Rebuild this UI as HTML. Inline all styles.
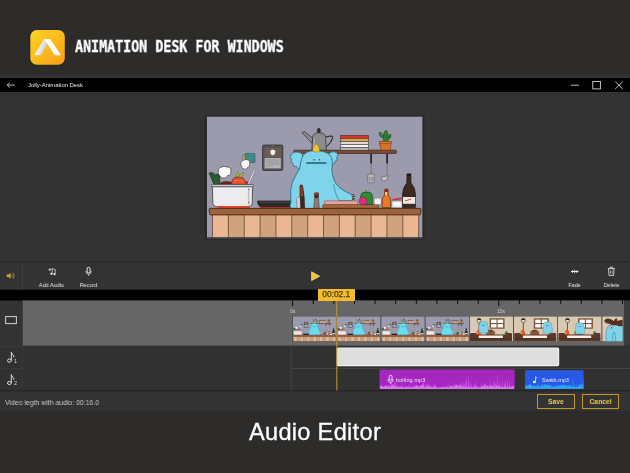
<!DOCTYPE html>
<html>
<head>
<meta charset="utf-8">
<title>Animation Desk for Windows - Audio Editor</title>
<style>
html,body{margin:0;padding:0;background:#2d2c2b;}
body{width:630px;height:473px;overflow:hidden;position:relative;font-family:"Liberation Sans",sans-serif;color:#fff;}
.abs{position:absolute;}
#title,#caption,#status,.lbl,.btn,#tl,.clipt,.tk,.sub,#tbar .t{will-change:transform;}
#stage{position:absolute;left:0;top:0;width:630px;height:473px;overflow:hidden;background:#2d2c2b;}
#title{position:absolute;left:75px;top:38px;font-family:"DejaVu Sans Mono","Liberation Mono",monospace;font-weight:bold;font-size:15.6px;line-height:normal;white-space:nowrap;transform-origin:0 0;transform:scaleX(0.855);color:#fff;-webkit-text-stroke:0.35px #fff;will-change:transform;}
#win{position:absolute;left:0;top:77.8px;width:630px;height:333px;background:#333333;}
#tbar{position:absolute;left:0;top:0;width:630px;height:14.7px;background:#000;}
#tbar .t{position:absolute;left:27.5px;top:4px;font-size:5.9px;line-height:7px;color:#e6e6e6;white-space:nowrap;}
#caption{position:absolute;left:0;top:417.6px;width:630px;text-align:center;font-size:23.6px;line-height:28px;color:#fff;white-space:nowrap;letter-spacing:0.3px;-webkit-text-stroke:0.3px #fff;}
.lbl{position:absolute;font-size:6.1px;line-height:7px;color:#e4e4e4;white-space:nowrap;text-align:center;transform:scaleX(0.9);}
#status{position:absolute;left:5.2px;top:398.6px;font-size:7.5px;line-height:8px;color:#c8c8c8;white-space:nowrap;transform-origin:0 0;transform:scaleX(0.918);}
.btn{position:absolute;top:394.2px;height:13px;border:1px solid #c3952b;box-sizing:content-box;font-size:6.8px;line-height:13px;font-weight:bold;color:#f2c547;text-align:center;}
#tl{position:absolute;left:318.2px;top:289.3px;width:36.6px;height:11.6px;background:#f3bb2d;color:#4a3a12;font-size:8.4px;line-height:11.4px;text-align:center;-webkit-text-stroke:0.25px #4a3a12;}
.clipt{position:absolute;font-size:5.5px;line-height:7px;color:#f2e6f6;white-space:nowrap;}
.sub{position:absolute;font-size:5.4px;line-height:7px;color:#dcdcdc;}
.tk{position:absolute;font-size:5px;line-height:6px;color:#d0d0d0;}
</style>
</head>
<body>
<div id="stage">

<!-- header -->
<svg class="abs" style="left:26px;top:26px" width="44" height="44" viewBox="26 26 44 44">
  <defs>
    <linearGradient id="lg" x1="0" y1="0" x2="1" y2="1">
      <stop offset="0" stop-color="#ffd323"/>
      <stop offset="0.55" stop-color="#fbb81c"/>
      <stop offset="1" stop-color="#f89c1a"/>
    </linearGradient>
    <linearGradient id="la" x1="0" y1="0" x2="1" y2="0.35">
      <stop offset="0.25" stop-color="#ffffff"/>
      <stop offset="0.8" stop-color="#cfd0e2"/>
    </linearGradient>
  </defs>
  <rect x="29.6" y="29.4" width="35.8" height="35.9" rx="7" fill="#222120"/>
  <rect x="30.3" y="30.1" width="34.5" height="34.6" rx="6.4" fill="url(#lg)"/>
  <path d="M44.2 39.1 H50 L40.6 55.3 H34.2 Z" fill="url(#la)"/>
  <path d="M44.2 39.1 H50 L61 55.3 H54.8 Z" fill="#ffffff"/>
</svg>
<div id="title">ANIMATION DESK FOR WINDOWS</div>

<div id="glow" class="abs" style="left:0;top:74px;width:630px;height:4px;background:linear-gradient(#2d2c2b,#363534)"></div>
<!-- app window -->
<div id="win">
  <div id="tbar">
    <svg class="abs" style="left:0;top:0" width="630" height="15" viewBox="0 78 630 15">
      <g stroke="#dedede" stroke-width="0.85" fill="none">
        <path d="M7.2 85.1 H14.6 M9.8 82.6 L7.2 85.1 L9.8 87.6"/>
        <path d="M571 85.2 H579"/>
        <rect x="592.8" y="81.5" width="7.6" height="7.4"/>
        <path d="M615.2 81.5 L622.8 89 M622.8 81.5 L615.2 89"/>
      </g>
    </svg>
    <div class="t">Jolly-Animation Desk</div>
  </div>
</div>

<!-- PREVIEW -->
<svg id="preview" class="abs" style="left:204px;top:114px" width="222" height="127" viewBox="204 114 222 127">
<!--PV0--><defs>
<symbol id="kitchen" viewBox="207 116.4 215.6 122.2" preserveAspectRatio="none">
  <rect x="207" y="116.4" width="215.6" height="122.2" fill="#9c9aad"/>
  <!-- shelf -->
  <rect x="293.8" y="150.2" width="102.6" height="3.2" rx="1" fill="#7d4b33" stroke="#3b2419" stroke-width="0.7"/>
  <!-- kettle -->
  <g stroke="#333336" stroke-width="0.8" stroke-linejoin="round">
    <path d="M312.3 143.5 L302.2 132.6 L304.6 131.6 L312.6 138.2 Z" fill="#8f8f8f"/>
    <path d="M325.6 137 Q333.5 134.8 332.6 137.6 Q330.8 143.5 326 146.8" fill="none" stroke-width="1.2"/>
    <path d="M311.8 150.2 L312.6 137.2 Q313 133 318.8 132.6 Q325.2 133 325.6 137.2 L326.4 150.2 Z" fill="#8c8c8c"/>
    <rect x="317.4" y="128.6" width="2.8" height="4" rx="0.8" fill="#2a2a2a"/>
  </g>
  <path d="M314.2 138 L313.8 149" stroke="#b5b5b5" stroke-width="1" fill="none"/>
  <!-- books -->
  <g stroke="#3a3030" stroke-width="0.55">
    <rect x="340.5" y="135.4" width="28" height="3.1" fill="#d8332b"/>
    <rect x="340.8" y="138.5" width="27.6" height="3" fill="#e0a23c"/>
    <rect x="340.5" y="141.5" width="28" height="2.9" fill="#d9d9d9"/>
    <rect x="340.8" y="144.4" width="27.6" height="2.9" fill="#f4f4f4"/>
    <rect x="340.5" y="147.3" width="28" height="2.9" fill="#b9b9b9"/>
  </g>
  <!-- cactus -->
  <g stroke="#1f4a1f" stroke-width="0.5" fill="#2f7d32">
    <path d="M383.6 142 Q382.6 134 384.6 131.2 Q386.6 129.6 387.6 132 Q388.6 136 388 142 Z"/>
    <path d="M383.4 138 Q379.4 137.6 379 133.6 Q379.4 131.4 381 132.4 Q381.6 135 383.6 135.4 Z"/>
    <path d="M388 139.4 Q391.4 138.4 391 134.8 Q390.2 133.2 389.2 134.6 Q389 136.6 387.8 137 Z"/>
  </g>
  <path d="M379.6 141.8 H391.2 L390.2 150.2 H380.8 Z" fill="#db6f2a" stroke="#5a2a12" stroke-width="0.5"/>
  <rect x="379.4" y="141.4" width="12" height="2" fill="#e27a33" stroke="#5a2a12" stroke-width="0.4"/>
  <!-- hanging utensils -->
  <g>
    <rect x="370.2" y="153.4" width="1.8" height="10.4" rx="0.8" fill="#2b2b2b"/>
    <rect x="370.7" y="163.8" width="0.9" height="10.4" fill="#7b7b7b"/>
    <rect x="367.8" y="174" width="6.4" height="8.8" rx="1.2" fill="#b9b9b9" stroke="#4a4a4a" stroke-width="0.5"/>
    <path d="M369.6 177 V181.4 M371 177 V181.4 M372.4 177 V181.4" stroke="#6a6a6a" stroke-width="0.5"/>
    <rect x="386.2" y="153.4" width="1.8" height="10.4" rx="0.8" fill="#2b2b2b"/>
    <rect x="386.7" y="163.8" width="0.9" height="12" fill="#7b7b7b"/>
    <path d="M381.2 177.4 Q381.6 181.4 385 180.8 Q388.2 180 387.8 175.6 Z" fill="#c4c4c4" stroke="#4a4a4a" stroke-width="0.5"/>
  </g>
  <!-- poster -->
  <rect x="262.6" y="145" width="20.2" height="25.4" rx="1.2" fill="#55555a" stroke="#2d2d30" stroke-width="0.8"/>
  <rect x="264.6" y="148" width="16.2" height="9.2" fill="#6d5c52"/>
  <path d="M270.4 150.6 L272.8 149.4 L275.2 150.6 L275 154 L272.8 155.4 L270.6 154 Z" fill="#f2f2f2"/>
  <rect x="264.6" y="158" width="16.2" height="10.4" fill="#b4b4b6"/>
  <path d="M266 160 H279.4 M266 162 H279.4 M266 164 H279.4 M266 166 H273" stroke="#7a7a7e" stroke-width="0.6"/>
  <rect x="271.6" y="144.2" width="2.4" height="2" fill="#8a5a3a"/>
  <!-- sticky note -->
  <rect x="243" y="155" width="3.4" height="5.6" rx="1" fill="#e8b540" stroke="#3a3030" stroke-width="0.4"/>
  <rect x="245" y="153.4" width="10" height="9.2" rx="0.8" fill="#3c8b8c" stroke="#2a4a4c" stroke-width="0.5"/>
  <!-- steam clouds -->
  <path d="M241 163.6 Q240 161 243 160.6 Q245.6 158.6 248 160 Q250.6 160.6 249.6 163.6 Q250.4 167 247.4 167.6 Q246.6 170.2 244 169 Q241.2 168.6 241.6 166 Q240 165 241 163.6 Z" fill="#fbfbfb" stroke="#4a4444" stroke-width="0.7"/>
  <path d="M218.6 171 Q217 168.4 220.6 167.4 Q224 165.6 227 167 Q231.4 167 230.8 171 Q231.6 175.4 227.6 175.6 Q226.6 178.8 223.4 178 Q220.4 178.4 220 175.6 Q217.2 174.6 218.6 171 Z" fill="#fbfbfb" stroke="#4a4444" stroke-width="0.7"/>
  <!-- veggies in pot -->
  <path d="M209 173 Q213 171.6 215.6 175 Q217.6 172.6 219.4 175.6 L220 184.6 H214 Q211.6 178.6 209 173 Z" fill="#2a5d2c" stroke="#16331a" stroke-width="0.7"/>
  <path d="M219 184.6 Q222 180.4 227 181.4 Q231 181 233 184.6 Z" fill="#6a1f1c"/>
  <path d="M237.4 178 Q235.8 173.6 237.4 171.6 Q239 173.4 239.6 176 Q241.6 172.6 243.6 172.6 Q243.2 176 240.6 178.6 Z" fill="#a5c23a" stroke="#3a5a1a" stroke-width="0.4"/>
  <path d="M231.6 184.6 Q231 178.4 237 177 Q243.6 176.6 245.4 181.6 Q245.8 184 245 184.6 Z" fill="#e5532d" stroke="#5a2012" stroke-width="0.7"/>
  <path d="M233.6 181 Q238 179.6 243.4 181.4" stroke="#f08a5a" stroke-width="0.7" fill="none"/>
  <circle cx="247.6" cy="183" r="2" fill="#c52a2a"/>
  <!-- ladle handle in pot -->
  <path d="M254 169.6 L255.4 170.2 L249 184.6 L247.4 184.2 Z" fill="#e9e9e9" stroke="#5a5555" stroke-width="0.4"/>
  <!-- pot -->
  <path d="M218 204 Q222 200.4 226 205 Q230 201 234 205 Q238 201 242 205 Q246 201.4 249.6 204.6 L250 208.4 H217.6 Z" fill="#e5452b"/>
  <path d="M212.4 186.4 H252.6 L252.2 203.4 Q252 206.4 248.6 206.6 H216.4 Q213 206.4 212.8 203.4 Z" fill="#ececee" stroke="#45454a" stroke-width="0.9"/>
  <rect x="211.4" y="184.4" width="42" height="2.4" rx="1" fill="#cdcdd0" stroke="#45454a" stroke-width="0.8"/>
  <path d="M248.6 188 V205.6" stroke="#bcbcc0" stroke-width="1.4"/>
  <circle cx="249" cy="189.6" r="0.6" fill="#555"/><circle cx="249" cy="202.4" r="0.6" fill="#555"/>
  <path d="M218 206.8 H249" stroke="#e5452b" stroke-width="1.6"/>
  <!-- pan -->
  <path d="M259.4 206.4 H294 V208.4 H259.4 Z" fill="#d8402a"/>
  <path d="M257.6 201 H295.4 Q295.6 206.6 291 206.8 H262 Q257.6 206.6 257.6 201 Z" fill="#29292c" stroke="#161618" stroke-width="0.7"/>
  <path d="M259 202.2 H294" stroke="#5a5a60" stroke-width="0.7"/>
  <!-- monster -->
  <g fill="#80d4ea" stroke="#2a7690" stroke-width="0.95" stroke-linejoin="round">
    <path d="M302.6 155.6 C302.3 153.4 300.8 153.2 299.6 152.6 C298.4 152.0 296.5 151.9 295.2 152.1 C293.9 152.3 292.8 152.7 292.0 153.6 C291.2 154.5 290.4 156.3 290.4 157.3 C290.4 158.3 291.7 158.8 291.8 159.6 C291.9 160.4 290.7 161.3 290.9 162.0 C291.1 162.7 292.8 162.9 293.2 163.6 C293.6 164.3 292.9 165.5 293.4 166.0 C293.9 166.5 295.5 166.2 296.4 166.6 C297.3 167.0 297.8 168.7 298.6 168.6 C299.4 168.5 300.7 168.2 301.4 166.0 C302.1 163.8 302.9 157.8 302.6 155.6 Z"/>
    <path d="M328.4 155.0 C328.6 153.7 329.8 152.9 330.6 152.4 C331.4 151.9 332.4 151.7 333.4 151.8 C334.4 151.9 335.9 152.2 336.6 152.8 C337.4 153.4 337.9 154.6 337.9 155.4 C337.9 156.2 336.7 156.8 336.6 157.6 C336.5 158.4 337.5 159.3 337.2 160.0 C336.9 160.7 335.4 160.9 334.8 161.6 C334.2 162.3 334.4 163.5 333.8 164.0 C333.2 164.5 331.7 165.3 331.0 164.6 C330.3 163.9 330.0 161.6 329.6 160.0 C329.2 158.4 328.2 156.3 328.4 155.0 Z"/>
    <path d="M316.5 150.8 C314.3 150.8 311.9 150.8 310.0 151.2 C308.1 151.6 306.7 152.2 305.4 153.2 C304.1 154.2 303.2 155.4 302.4 157.0 C301.6 158.6 301.1 161.1 300.6 163.0 C300.1 164.9 300.4 166.5 299.6 168.5 C298.8 170.5 297.2 172.7 296.0 175.0 C294.8 177.3 293.3 180.1 292.4 182.6 C291.5 185.1 291.0 187.2 290.8 190.2 C290.6 193.2 290.8 197.8 291.0 200.8 C291.2 203.8 288.2 207.1 292.2 208.4 C296.2 209.7 307.2 208.6 315.0 208.6 C322.8 208.6 335.0 209.7 339.0 208.4 C343.0 207.1 338.0 202.3 338.8 201.0 C339.6 199.7 341.9 200.9 344.0 200.8 C346.1 200.7 349.9 201.0 351.5 200.4 C353.1 199.8 353.6 198.3 353.8 197.4 C354.0 196.5 353.8 195.7 352.6 194.8 C351.5 194.0 348.9 193.4 346.9 192.3 C344.9 191.2 342.6 189.9 340.8 188.5 C339.0 187.1 337.5 185.8 336.3 184.0 C335.1 182.2 334.1 180.3 333.4 178.0 C332.7 175.7 332.1 172.8 331.9 170.4 C331.7 168.0 332.4 165.7 332.3 163.5 C332.2 161.3 332.0 159.1 331.4 157.5 C330.8 155.9 329.8 154.8 328.4 153.8 C327.0 152.8 325.0 152.0 323.0 151.5 C321.0 151.0 318.7 150.9 316.5 150.8 Z"/>
  </g>
  <path d="M300.8 184 Q299.4 196 300.4 208" stroke="#2b7d97" stroke-width="0.7" fill="none"/>
  <path d="M333.6 184 Q334.6 193 338.8 200.6" stroke="#2b7d97" stroke-width="0.7" fill="none"/>
  <path d="M306.8 163 H326" stroke="#245a6e" stroke-width="1.3" stroke-linecap="round"/>
  <circle cx="314" cy="159.8" r="0.8" fill="#245a6e"/><circle cx="319.4" cy="159.8" r="0.8" fill="#245a6e"/>
  <path d="M312.8 151.6 Q313 147 314.6 145.6 Q315.2 144 316.6 144.2 Q318 144.4 318.2 146 Q319.8 148 319.8 151.6 Q316.4 152.8 312.8 151.6 Z" fill="#f2c230" stroke="#8a6a14" stroke-width="0.4"/>
  <!-- hand + thing -->
  <path d="M351.4 194.6 Q354.6 193.4 355 196 Q355.6 199.4 352.6 200.4 Z" fill="#3a3a3e"/>
  <path d="M352 196 L354.6 195.4 M352.4 198 L355 197.4" stroke="#e8e8e8" stroke-width="0.6"/>
  <!-- knife block -->
  <path d="M297 208.4 L296.6 199.6 Q298.2 196 300.2 196 L304.6 208.4 Z" fill="#d2d2d6" stroke="#3a3a3e" stroke-width="0.4"/>
  <path d="M299.6 185.4 Q301.6 184.2 303 185.6 L304.6 197.4 L305 208.4 L300.4 208.4 L299.8 197 Z" fill="#3a2a26"/>
  <path d="M300.2 186 Q301.4 185.2 302.4 186 L303.4 196 L300.6 196.4 Z" fill="#8a3f22"/>
  <!-- pepper shaker -->
  <path d="M314.4 198 L318.6 198 L319.4 208.4 L313.6 208.4 Z" fill="#8b7b73" stroke="#3c3030" stroke-width="0.4"/>
  <rect x="314.2" y="192.6" width="4.6" height="5.4" rx="1" fill="#4a2622"/>
  <rect x="314.6" y="193.2" width="3.8" height="1.8" rx="0.6" fill="#b03028"/>
  <!-- cutting boards -->
  <rect x="324.6" y="200.8" width="33" height="4" rx="0.8" fill="#e4a39b" stroke="#6a3a34" stroke-width="0.4"/>
  <rect x="322.6" y="204.6" width="56" height="3.8" rx="0.6" fill="#a5663f" stroke="#4f2c1a" stroke-width="0.4"/>
  <!-- green pepper + onion -->
  <path d="M361.4 204.6 Q359.6 197 361.6 193.6 Q363.6 191.6 366 192.6 Q368.6 191.4 371 193 Q373.4 196 372.2 204.6 Z" fill="#2e8a2f" stroke="#17451a" stroke-width="0.7"/>
  <path d="M365.8 193 L366.4 190 " stroke="#3d6a1a" stroke-width="1" />
  <ellipse cx="363" cy="201" rx="3.9" ry="3.9" fill="#d9327a" stroke="#6a1236" stroke-width="0.4"/>
  <!-- small bowl -->
  <path d="M374 199 Q377.6 196.6 381.4 199 L381 204.6 H374.6 Z" fill="#f3f3f5" stroke="#5a5a60" stroke-width="0.4"/>
  <!-- orange bottle -->
  <path d="M384.6 191.6 H388.2 L388.4 195.4 Q390.8 197.6 390.6 201 L390.6 207.6 H382.2 L382.2 201 Q382 197.6 384.4 195.4 Z" fill="#ea7a22" stroke="#5a2a10" stroke-width="0.7"/>
  <rect x="384.4" y="188.8" width="4" height="3" rx="0.6" fill="#8a241c"/>
  <path d="M386 192 V195" stroke="#f6d8b0" stroke-width="1.6"/>
  <!-- white container -->
  <path d="M392.6 199 L401.6 197.6 L401.8 199.2 L392.8 200.6 Z" fill="#c6322a"/>
  <rect x="391.8" y="201" width="10.4" height="6.8" rx="0.8" fill="#e7e7ea" stroke="#55555a" stroke-width="0.4"/>
  <rect x="393.4" y="202.4" width="7" height="3.2" fill="#f8f8fa"/>
  <!-- dark bottle -->
  <path d="M407 174.4 H410.8 L411 183 Q415.4 188 415.4 194 L415.4 207.6 H402.6 L402.6 194 Q402.6 188 406.8 183 Z" fill="#3a2a22" stroke="#1c1410" stroke-width="0.7"/>
  <rect x="406.8" y="173.6" width="4.2" height="2.2" rx="0.6" fill="#1f1815"/>
  <rect x="403" y="197" width="12.2" height="6.8" fill="#efeadf"/>
  <path d="M405 201 L411 199" stroke="#c03a2a" stroke-width="0.9"/>
  <!-- counter -->
  <rect x="212.50" y="214.8" width="15.86" height="22.6" fill="#e9b792"/><rect x="228.36" y="214.8" width="15.86" height="22.6" fill="#cfa37e"/><rect x="244.22" y="214.8" width="15.86" height="22.6" fill="#e9b792"/><rect x="260.08" y="214.8" width="15.86" height="22.6" fill="#cfa37e"/><rect x="275.94" y="214.8" width="15.86" height="22.6" fill="#e9b792"/><rect x="291.80" y="214.8" width="15.86" height="22.6" fill="#cfa37e"/><rect x="307.66" y="214.8" width="15.86" height="22.6" fill="#e9b792"/><rect x="323.52" y="214.8" width="15.86" height="22.6" fill="#cfa37e"/><rect x="339.38" y="214.8" width="15.86" height="22.6" fill="#e9b792"/><rect x="355.24" y="214.8" width="15.86" height="22.6" fill="#cfa37e"/><rect x="371.10" y="214.8" width="15.86" height="22.6" fill="#e9b792"/><rect x="386.96" y="214.8" width="15.86" height="22.6" fill="#cfa37e"/><rect x="402.82" y="214.8" width="15.86" height="22.6" fill="#e9b792"/><path d="M212.50 214.8 V237.4" stroke="#6e4229" stroke-width="0.8"/><path d="M228.36 214.8 V237.4" stroke="#6e4229" stroke-width="0.8"/><path d="M244.22 214.8 V237.4" stroke="#6e4229" stroke-width="0.8"/><path d="M260.08 214.8 V237.4" stroke="#6e4229" stroke-width="0.8"/><path d="M275.94 214.8 V237.4" stroke="#6e4229" stroke-width="0.8"/><path d="M291.80 214.8 V237.4" stroke="#6e4229" stroke-width="0.8"/><path d="M307.66 214.8 V237.4" stroke="#6e4229" stroke-width="0.8"/><path d="M323.52 214.8 V237.4" stroke="#6e4229" stroke-width="0.8"/><path d="M339.38 214.8 V237.4" stroke="#6e4229" stroke-width="0.8"/><path d="M355.24 214.8 V237.4" stroke="#6e4229" stroke-width="0.8"/><path d="M371.10 214.8 V237.4" stroke="#6e4229" stroke-width="0.8"/><path d="M386.96 214.8 V237.4" stroke="#6e4229" stroke-width="0.8"/><path d="M402.82 214.8 V237.4" stroke="#6e4229" stroke-width="0.8"/><path d="M418.68 214.8 V237.4" stroke="#6e4229" stroke-width="0.8"/>
  <path d="M209.6 208.4 H420.4 Q421.2 208.4 421 209.6 L420.6 213.8 Q420.4 214.9 419.4 214.9 H210.6 Q209.6 214.9 209.5 213.8 L209.2 209.6 Q209.2 208.4 209.6 208.4 Z" fill="#9c6239" stroke="#42251a" stroke-width="0.9"/>
  <rect x="207" y="237.3" width="215.6" height="1.4" fill="#2e2a2c"/>
</symbol>
</defs>

<rect x="204.6" y="114.9" width="220" height="125" fill="#2a2a29"/>
<use href="#kitchen" x="207" y="116.4" width="215.6" height="122.2"/>
<!--PV1-->
</svg>

<!-- toolbar / timeline chrome -->
<svg class="abs" style="left:0;top:255px" width="630" height="160" viewBox="0 255 630 160">
  <!-- toolbar top line -->
  <rect x="0" y="261.5" width="630" height="1" fill="#222"/>
  <rect x="22" y="264" width="0.8" height="25" fill="#444"/>
  <!-- black ruler bar -->
  <rect x="0" y="289.7" width="630" height="10.8" fill="#000"/>
  <!-- video track -->
  <rect x="22.3" y="300.5" width="601.7" height="45.3" fill="#666666"/>
  <rect x="624" y="300.5" width="6" height="45.3" fill="#3a3a3a"/>
  <!-- audio tracks -->
  <rect x="0" y="345.8" width="630" height="45" fill="#313131"/>
  <rect x="0" y="345.8" width="22" height="0.8" fill="#3d3d3d"/>
  <rect x="0" y="368" width="22" height="0.8" fill="#3d3d3d"/>
  <rect x="22" y="300.5" width="0.8" height="90" fill="#3a3a3a"/>
  <rect x="290.8" y="345.8" width="0.8" height="44.8" fill="#484848"/>
  <rect x="291" y="368" width="339" height="0.8" fill="#484848"/>
  <rect x="0" y="390.3" width="630" height="1" fill="#232323"/>
  <!--TL0--><defs>
<g id="lbase">
  <rect x="0" y="0" width="44.2" height="25.3" fill="#d8c9b4"/>
  <rect x="20.3" y="2" width="15.1" height="10.4" fill="#7b5238"/>
  <rect x="21.7" y="3.3" width="5.6" height="3.4" fill="#fbfbfb"/><rect x="28.4" y="3.3" width="5.6" height="3.4" fill="#fbfbfb"/>
  <rect x="21.7" y="7.8" width="5.6" height="3.4" fill="#fbfbfb"/><rect x="28.4" y="7.8" width="5.6" height="3.4" fill="#fbfbfb"/>
  <rect x="9.2" y="5.6" width="0.8" height="8" fill="#4a3a30"/>
  <ellipse cx="9.6" cy="4.4" rx="2" ry="2.1" fill="#ecd2b8" stroke="#3a2a22" stroke-width="0.5"/>
  <path d="M7.5 4 Q7.6 1.9 9.6 2 Q11.7 1.9 11.8 4 Q9.6 2.8 7.5 4 Z" fill="#2a1c18"/>
  <path d="M7 19 Q6.4 14 9 13.2 Q11.6 13.6 11.4 19 Z" fill="#e4522a"/>
  <path d="M6.8 17 Q7.6 14.8 9 15.4 L8.6 19 H6.8 Z" fill="#f08a2a"/>
  <rect x="16.7" y="14.4" width="9" height="4.6" rx="1.6" fill="#8b5a3b"/>
  <rect x="18.6" y="13.4" width="5" height="2" rx="1" fill="#6d4128"/>
  <path d="M27.9 18.8 L28.5 14 H30.4 L31 18.8 Z" fill="#e7c79c"/>
  <path d="M35.6 18.8 Q35.2 15 37.2 14.6 Q39.2 15 38.8 18.8 Z" fill="#3f8a3a"/>
  <path d="M0.4 25.3 V18 Q0.4 16.6 2 16.6 H5.6 Q7 16.6 7 18 V18.2 H36.6 V18 Q36.6 16.6 38 16.6 H41.4 Q43 16.6 43 18 V25.3 Z" fill="#59372a"/>
  <rect x="0.4" y="22.2" width="42.6" height="0.6" fill="#452a1c"/>
  <rect x="9.2" y="19.1" width="24.5" height="2.7" rx="0.5" fill="#f4f1ee"/>
</g>
<g id="mini">
  <path d="M0.6 11 Q-0.4 5 1 2.4 Q0.2 0.6 1.8 0.4 Q3 -0.4 4.6 0.2 Q6.6 -0.4 7.8 0.6 Q9.4 0.8 8.8 2.6 Q10.4 6 9.6 11 Z" fill="#7fd4ea" stroke="#3a8ea6" stroke-width="0.4"/>
  <path d="M3.2 3.6 H6.4" stroke="#2a6a80" stroke-width="0.5"/>
</g>
<symbol id="living0" viewBox="0 0 44.2 25.3" preserveAspectRatio="none">
  <use href="#lbase"/>
  <use href="#mini" x="9.2" y="5.4" transform="translate(0 0)"/>
</symbol>
<symbol id="living1" viewBox="0 0 44.2 25.3" preserveAspectRatio="none">
  <use href="#lbase"/>
  <use href="#mini" x="29.3" y="5.8"/>
</symbol>
<symbol id="living2" viewBox="0 0 44.2 25.3" preserveAspectRatio="none">
  <use href="#lbase"/>
  <use href="#mini" x="17.3" y="6.6"/>
</symbol>
<symbol id="closeup" viewBox="0 0 20.9 25.3" preserveAspectRatio="none">
  <rect x="0" y="0" width="20.9" height="25.3" fill="#d8c9b4"/>
  <path d="M4 25.3 Q3 14 6 10 Q9 7.4 13 8.6 Q18 8 20.9 9 V25.3 Z" fill="#7fd4ea" stroke="#2f7f98" stroke-width="0.5"/>
  <path d="M10.4 25.3 Q10 18 12 15.6 Q14 18 13.6 25.3" fill="none" stroke="#2f7f98" stroke-width="0.5"/>
  <path d="M2 4.4 Q4 1.4 8 2.6 Q10.6 3.4 12 4.6 Q13 1.6 14.6 2 Q15.6 3.4 15.4 5 Q18 3.4 20.9 3.8 V9.6 Q17 10.6 14 8.6 Q10 9.4 7 7.4 Q3.6 7.6 2 4.4 Z" fill="#5a2e1e"/>
  <circle cx="9.2" cy="11" r="1.6" fill="#f6f6f6" stroke="#333" stroke-width="0.4"/>
  <circle cx="9.4" cy="11.2" r="0.6" fill="#222"/>
</symbol>
</defs>
<rect x="292.10" y="299.5" width="1" height="6.6" fill="#0a0a0a"/>
<rect x="312.72" y="299.5" width="1" height="4.4" fill="#0a0a0a"/>
<rect x="333.34" y="299.5" width="1" height="4.4" fill="#0a0a0a"/>
<rect x="353.96" y="299.5" width="1" height="4.4" fill="#0a0a0a"/>
<rect x="374.58" y="299.5" width="1" height="4.4" fill="#0a0a0a"/>
<rect x="395.20" y="299.5" width="1" height="4.4" fill="#0a0a0a"/>
<rect x="415.82" y="299.5" width="1" height="4.4" fill="#0a0a0a"/>
<rect x="436.44" y="299.5" width="1" height="4.4" fill="#0a0a0a"/>
<rect x="457.06" y="299.5" width="1" height="4.4" fill="#0a0a0a"/>
<rect x="477.68" y="299.5" width="1" height="4.4" fill="#0a0a0a"/>
<rect x="498.30" y="299.5" width="1" height="6.6" fill="#0a0a0a"/>
<rect x="518.92" y="299.5" width="1" height="4.4" fill="#0a0a0a"/>
<rect x="539.54" y="299.5" width="1" height="4.4" fill="#0a0a0a"/>
<rect x="560.16" y="299.5" width="1" height="4.4" fill="#0a0a0a"/>
<rect x="580.78" y="299.5" width="1" height="4.4" fill="#0a0a0a"/>
<rect x="601.40" y="299.5" width="1" height="4.4" fill="#0a0a0a"/>
<rect x="622.02" y="299.5" width="1" height="4.4" fill="#0a0a0a"/>
<rect x="292.2" y="316.0" width="330.9" height="25.900000000000002" fill="#4a4a4a"/>
<use href="#kitchen" x="292.80" y="316.3" width="43.60" height="25.3"/>
<path transform="translate(292.50 316.3)" d="M19.2 8.6 Q18.4 7.4 19.8 7.4 Q21.8 6.6 23.8 7.4 Q25.4 7.4 24.6 8.8 Q25.4 12 27.2 14.6 Q28.2 17 27.6 18.4 H16.4 Q15.8 16 16.6 14 Q18.4 11.6 19.2 8.6 Z" fill="#69dcee" stroke="#2f8aa4" stroke-width="0.3"/>
<path transform="translate(292.50 316.3)" d="M20.4 10.4 H23.4" stroke="#2a6f86" stroke-width="0.4"/>
<use href="#kitchen" x="337.00" y="316.3" width="43.60" height="25.3"/>
<path transform="translate(336.70 316.3)" d="M19.2 8.6 Q18.4 7.4 19.8 7.4 Q21.8 6.6 23.8 7.4 Q25.4 7.4 24.6 8.8 Q25.4 12 27.2 14.6 Q28.2 17 27.6 18.4 H16.4 Q15.8 16 16.6 14 Q18.4 11.6 19.2 8.6 Z" fill="#69dcee" stroke="#2f8aa4" stroke-width="0.3"/>
<path transform="translate(336.70 316.3)" d="M20.4 10.4 H23.4" stroke="#2a6f86" stroke-width="0.4"/>
<use href="#kitchen" x="381.20" y="316.3" width="43.60" height="25.3"/>
<path transform="translate(380.90 316.3)" d="M19.2 8.6 Q18.4 7.4 19.8 7.4 Q21.8 6.6 23.8 7.4 Q25.4 7.4 24.6 8.8 Q25.4 12 27.2 14.6 Q28.2 17 27.6 18.4 H16.4 Q15.8 16 16.6 14 Q18.4 11.6 19.2 8.6 Z" fill="#69dcee" stroke="#2f8aa4" stroke-width="0.3"/>
<path transform="translate(380.90 316.3)" d="M20.4 10.4 H23.4" stroke="#2a6f86" stroke-width="0.4"/>
<use href="#kitchen" x="425.40" y="316.3" width="43.60" height="25.3"/>
<path transform="translate(425.10 316.3)" d="M19.2 8.6 Q18.4 7.4 19.8 7.4 Q21.8 6.6 23.8 7.4 Q25.4 7.4 24.6 8.8 Q25.4 12 27.2 14.6 Q28.2 17 27.6 18.4 H16.4 Q15.8 16 16.6 14 Q18.4 11.6 19.2 8.6 Z" fill="#69dcee" stroke="#2f8aa4" stroke-width="0.3"/>
<path transform="translate(425.10 316.3)" d="M20.4 10.4 H23.4" stroke="#2a6f86" stroke-width="0.4"/>
<use href="#living0" x="469.60" y="316.3" width="43.60" height="25.3"/>
<use href="#living1" x="513.80" y="316.3" width="43.60" height="25.3"/>
<use href="#living2" x="558.00" y="316.3" width="43.60" height="25.3"/>
<use href="#closeup" x="602.20" y="316.3" width="20.60" height="25.3"/>
<rect x="336.6" y="347.4" width="222.6" height="18.8" rx="1.6" fill="#f2f2f2"/>
<rect x="337.6" y="348.6" width="220.6" height="16.4" rx="1" fill="#dedede"/>
<rect x="379.5" y="369.6" width="135.2" height="19.4" rx="1" fill="#a627c0"/>
<path d="M380.0 389.0 L380.6 385.8 L381.3 389.0 Z M381.2 389.0 L381.8 384.4 L382.5 389.0 Z M382.3 389.0 L383.0 384.8 L383.6 389.0 Z M383.7 389.0 L384.3 386.8 L385.0 389.0 Z M385.2 389.0 L385.8 386.8 L386.5 389.0 Z M386.6 389.0 L387.3 386.5 L387.9 389.0 Z M387.8 389.0 L388.4 384.5 L389.1 389.0 Z M389.6 389.0 L390.2 385.9 L390.9 389.0 Z M390.8 389.0 L391.5 382.7 L392.1 389.0 Z M392.7 389.0 L393.4 382.8 L394.0 389.0 Z M394.1 389.0 L394.8 380.2 L395.4 389.0 Z M395.2 389.0 L395.9 380.9 L396.5 389.0 Z M396.5 389.0 L397.2 385.4 L397.8 389.0 Z M397.7 389.0 L398.3 384.5 L399.0 389.0 Z M399.5 389.0 L400.1 385.4 L400.8 389.0 Z M401.0 389.0 L401.7 383.1 L402.3 389.0 Z M402.4 389.0 L403.1 383.9 L403.7 389.0 Z M403.5 389.0 L404.2 386.5 L404.8 389.0 Z M404.8 389.0 L405.4 383.7 L406.1 389.0 Z M406.2 389.0 L406.8 385.6 L407.5 389.0 Z M407.8 389.0 L408.4 385.2 L409.1 389.0 Z M409.1 389.0 L409.7 383.8 L410.4 389.0 Z M410.8 389.0 L411.4 386.2 L412.1 389.0 Z M412.3 389.0 L413.0 384.9 L413.6 389.0 Z M414.2 389.0 L414.8 383.7 L415.5 389.0 Z M415.5 389.0 L416.1 382.2 L416.8 389.0 Z M416.6 389.0 L417.3 384.7 L417.9 389.0 Z M418.4 389.0 L419.0 385.8 L419.7 389.0 Z M419.9 389.0 L420.5 386.3 L421.2 389.0 Z M421.5 389.0 L422.2 381.8 L422.8 389.0 Z M423.1 389.0 L423.7 380.9 L424.4 389.0 Z M424.4 389.0 L425.1 381.9 L425.7 389.0 Z M426.0 389.0 L426.6 382.7 L427.3 389.0 Z M427.5 389.0 L428.1 381.2 L428.8 389.0 Z M429.4 389.0 L430.0 383.7 L430.7 389.0 Z M431.0 389.0 L431.7 386.3 L432.3 389.0 Z M432.7 389.0 L433.3 383.4 L434.0 389.0 Z M434.6 389.0 L435.3 383.0 L435.9 389.0 Z M435.9 389.0 L436.6 385.3 L437.2 389.0 Z M437.6 389.0 L438.2 387.0 L438.9 389.0 Z M439.1 389.0 L439.7 386.5 L440.4 389.0 Z M440.2 389.0 L440.9 387.0 L441.5 389.0 Z M441.9 389.0 L442.6 386.6 L443.2 389.0 Z M443.2 389.0 L443.9 385.4 L444.5 389.0 Z M445.1 389.0 L445.7 386.6 L446.4 389.0 Z M446.5 389.0 L447.2 384.1 L447.8 389.0 Z M448.4 389.0 L449.0 382.2 L449.7 389.0 Z M450.2 389.0 L450.8 384.9 L451.5 389.0 Z M451.6 389.0 L452.3 384.2 L452.9 389.0 Z M453.5 389.0 L454.1 380.3 L454.8 389.0 Z M454.6 389.0 L455.3 385.4 L455.9 389.0 Z M455.9 389.0 L456.5 385.2 L457.2 389.0 Z M457.4 389.0 L458.0 383.3 L458.7 389.0 Z M458.7 389.0 L459.3 386.5 L460.0 389.0 Z M460.1 389.0 L460.7 384.0 L461.4 389.0 Z M461.7 389.0 L462.3 379.3 L463.0 389.0 Z M463.3 389.0 L464.0 381.4 L464.6 389.0 Z M464.9 389.0 L465.6 379.0 L466.2 389.0 Z M466.0 389.0 L466.7 376.2 L467.3 389.0 Z M467.8 389.0 L468.4 375.3 L469.1 389.0 Z M469.6 389.0 L470.2 379.9 L470.9 389.0 Z M471.0 389.0 L471.6 383.0 L472.3 389.0 Z M472.6 389.0 L473.2 383.6 L473.9 389.0 Z M473.7 389.0 L474.3 382.2 L475.0 389.0 Z M474.9 389.0 L475.5 381.2 L476.2 389.0 Z M476.0 389.0 L476.6 384.9 L477.3 389.0 Z M477.2 389.0 L477.8 384.3 L478.5 389.0 Z M478.5 389.0 L479.2 385.4 L479.8 389.0 Z M480.4 389.0 L481.0 381.8 L481.7 389.0 Z M481.6 389.0 L482.2 384.7 L482.9 389.0 Z M482.9 389.0 L483.6 384.3 L484.2 389.0 Z M484.1 389.0 L484.7 381.8 L485.4 389.0 Z M486.0 389.0 L486.7 383.9 L487.3 389.0 Z M487.5 389.0 L488.2 385.9 L488.8 389.0 Z M488.7 389.0 L489.3 384.0 L490.0 389.0 Z M490.0 389.0 L490.6 379.9 L491.3 389.0 Z M491.1 389.0 L491.8 385.4 L492.4 389.0 Z M493.1 389.0 L493.7 380.3 L494.4 389.0 Z M494.2 389.0 L494.9 379.5 L495.5 389.0 Z M495.3 389.0 L496.0 379.1 L496.6 389.0 Z M497.2 389.0 L497.9 374.8 L498.5 389.0 Z M498.9 389.0 L499.6 381.3 L500.2 389.0 Z M500.3 389.0 L500.9 382.4 L501.6 389.0 Z M502.0 389.0 L502.7 378.9 L503.3 389.0 Z M503.8 389.0 L504.4 381.7 L505.1 389.0 Z M505.0 389.0 L505.7 377.9 L506.3 389.0 Z M507.0 389.0 L507.6 379.1 L508.3 389.0 Z M508.8 389.0 L509.4 380.6 L510.1 389.0 Z M510.5 389.0 L511.1 385.1 L511.8 389.0 Z M512.0 389.0 L512.6 384.6 L513.3 389.0 Z M513.1 389.0 L513.7 386.4 L514.4 389.0 Z " fill="#cf5ce8"/>
<path d="M380.0 389.0 L380.0 387.2 L380.8 385.6 L381.6 385.5 L382.4 385.4 L383.2 387.1 L384.0 387.1 L384.8 386.0 L385.6 385.3 L386.4 385.8 L387.2 387.3 L388.0 385.0 L388.8 385.5 L389.6 387.1 L390.4 386.7 L391.2 385.0 L392.0 386.5 L392.8 383.8 L393.6 386.3 L394.4 385.5 L395.2 387.4 L396.0 385.5 L396.8 387.0 L397.6 386.7 L398.4 385.9 L399.2 386.9 L400.0 387.1 L400.8 386.5 L401.6 387.6 L402.4 387.6 L403.2 387.6 L404.0 387.9 L404.8 387.5 L405.6 387.1 L406.4 387.4 L407.2 387.2 L408.0 386.0 L408.8 387.2 L409.6 388.0 L410.4 387.6 L411.2 386.5 L412.0 387.2 L412.8 386.7 L413.6 387.6 L414.4 387.2 L415.2 385.9 L416.0 386.3 L416.8 385.4 L417.6 386.1 L418.4 386.3 L419.2 386.4 L420.0 386.3 L420.8 385.6 L421.6 385.0 L422.4 386.0 L423.2 383.0 L424.0 387.2 L424.8 387.4 L425.6 387.4 L426.4 385.6 L427.2 387.3 L428.0 384.3 L428.8 385.6 L429.6 387.3 L430.4 386.9 L431.2 385.7 L432.0 387.5 L432.8 386.9 L433.6 387.6 L434.4 385.2 L435.2 387.0 L436.0 388.0 L436.8 387.0 L437.6 388.0 L438.4 386.8 L439.2 387.9 L440.0 388.0 L440.8 386.8 L441.6 387.3 L442.4 386.6 L443.2 387.7 L444.0 386.9 L444.8 387.0 L445.6 386.5 L446.4 387.7 L447.2 386.4 L448.0 387.6 L448.8 387.6 L449.6 386.6 L450.4 386.3 L451.2 385.7 L452.0 386.2 L452.8 386.3 L453.6 387.4 L454.4 386.7 L455.2 385.5 L456.0 384.5 L456.8 385.1 L457.6 385.6 L458.4 385.6 L459.2 387.1 L460.0 382.9 L460.8 385.6 L461.6 386.5 L462.4 386.8 L463.2 386.2 L464.0 387.0 L464.8 386.3 L465.6 387.0 L466.4 387.1 L467.2 387.8 L468.0 386.6 L468.8 387.9 L469.6 386.5 L470.4 387.6 L471.2 387.6 L472.0 387.8 L472.8 387.6 L473.6 386.4 L474.4 387.7 L475.2 387.5 L476.0 388.0 L476.8 387.1 L477.6 387.6 L478.4 387.9 L479.2 387.7 L480.0 387.1 L480.8 387.2 L481.6 386.5 L482.4 386.0 L483.2 386.0 L484.0 386.7 L484.8 382.8 L485.6 385.7 L486.4 387.5 L487.2 385.2 L488.0 385.6 L488.8 387.2 L489.6 386.2 L490.4 385.3 L491.2 386.0 L492.0 385.7 L492.8 385.8 L493.6 387.3 L494.4 387.4 L495.2 386.3 L496.0 386.2 L496.8 385.2 L497.6 386.0 L498.4 386.7 L499.2 385.0 L500.0 386.4 L500.8 387.8 L501.6 386.6 L502.4 386.7 L503.2 387.2 L504.0 387.2 L504.8 386.8 L505.6 385.8 L506.4 387.8 L507.2 386.8 L508.0 386.0 L508.8 388.0 L509.6 386.9 L510.4 386.8 L511.2 387.0 L512.0 385.9 L512.8 386.1 L513.6 385.8 L514.2 389.0 Z" fill="#dc74f0"/>
<g stroke="#f6e8fa" stroke-width="0.8" fill="none"><rect x="389.2" y="375.2" width="2.8" height="5.2" rx="1.4" fill="none" stroke-width="0.9"/><path d="M388 379 Q388 382.4 390.6 382.4 Q393.2 382.4 393.2 379 M390.6 382.4 V384.2"/></g>
<rect x="525" y="370.2" width="58.5" height="18.6" rx="1" fill="#2759e6"/>
<path d="M525.4 388.8 L526.0 387.2 L526.7 388.8 Z M526.9 388.8 L527.5 384.0 L528.2 388.8 Z M528.8 388.8 L529.4 384.7 L530.1 388.8 Z M530.1 388.8 L530.7 385.7 L531.4 388.8 Z M532.0 388.8 L532.6 386.1 L533.3 388.8 Z M533.6 388.8 L534.2 386.7 L534.9 388.8 Z M535.1 388.8 L535.7 383.9 L536.4 388.8 Z M536.2 388.8 L536.9 383.8 L537.5 388.8 Z M537.7 388.8 L538.4 382.7 L539.0 388.8 Z M539.4 388.8 L540.1 385.6 L540.7 388.8 Z M541.3 388.8 L541.9 385.0 L542.6 388.8 Z M542.4 388.8 L543.0 387.2 L543.7 388.8 Z M543.9 388.8 L544.5 385.7 L545.2 388.8 Z M545.2 388.8 L545.8 386.6 L546.5 388.8 Z M546.5 388.8 L547.2 385.4 L547.8 388.8 Z M548.3 388.8 L549.0 386.7 L549.6 388.8 Z M550.1 388.8 L550.7 383.3 L551.4 388.8 Z M551.2 388.8 L551.9 383.7 L552.5 388.8 Z M552.9 388.8 L553.6 384.1 L554.2 388.8 Z M554.2 388.8 L554.9 385.7 L555.5 388.8 Z M555.6 388.8 L556.3 382.3 L556.9 388.8 Z M557.2 388.8 L557.9 385.0 L558.5 388.8 Z M558.6 388.8 L559.3 383.9 L559.9 388.8 Z M559.7 388.8 L560.4 384.4 L561.0 388.8 Z M561.5 388.8 L562.2 382.4 L562.8 388.8 Z M563.4 388.8 L564.1 384.1 L564.7 388.8 Z M564.7 388.8 L565.4 384.1 L566.0 388.8 Z M565.9 388.8 L566.6 385.8 L567.2 388.8 Z M567.9 388.8 L568.5 383.0 L569.2 388.8 Z M569.6 388.8 L570.3 381.4 L570.9 388.8 Z M571.5 388.8 L572.2 376.5 L572.8 388.8 Z M573.1 388.8 L573.7 378.9 L574.4 388.8 Z M574.1 388.8 L574.8 380.3 L575.4 388.8 Z M575.6 388.8 L576.3 382.8 L576.9 388.8 Z M577.2 388.8 L577.9 386.2 L578.5 388.8 Z M578.3 388.8 L579.0 383.5 L579.6 388.8 Z M579.5 388.8 L580.1 384.1 L580.8 388.8 Z M580.9 388.8 L581.5 383.5 L582.2 388.8 Z M582.6 388.8 L583.2 376.1 L583.9 388.8 Z " fill="#2f7df0"/>
<path d="M525.2 388.8 L525.2 385.7 L526.0 385.8 L526.8 385.5 L527.6 386.6 L528.4 385.6 L529.2 384.3 L530.0 383.9 L530.8 385.2 L531.6 384.6 L532.4 386.6 L533.2 385.8 L534.0 385.5 L534.8 386.5 L535.6 386.7 L536.4 387.5 L537.2 383.7 L538.0 386.6 L538.8 385.9 L539.6 387.1 L540.4 386.7 L541.2 385.3 L542.0 383.2 L542.8 387.3 L543.6 384.8 L544.4 383.5 L545.2 386.0 L546.0 384.6 L546.8 384.1 L547.6 385.6 L548.4 385.6 L549.2 384.4 L550.0 385.4 L550.8 386.1 L551.6 387.3 L552.4 387.0 L553.2 386.1 L554.0 387.4 L554.8 386.3 L555.6 386.6 L556.4 386.6 L557.2 386.8 L558.0 384.7 L558.8 386.8 L559.6 385.0 L560.4 385.0 L561.2 386.6 L562.0 384.4 L562.8 384.7 L563.6 385.6 L564.4 385.8 L565.2 385.1 L566.0 385.1 L566.8 386.2 L567.6 385.4 L568.4 385.3 L569.2 386.2 L570.0 385.2 L570.8 385.8 L571.6 387.2 L572.4 387.1 L573.2 386.6 L574.0 387.2 L574.8 386.2 L575.6 387.2 L576.4 387.0 L577.2 386.0 L578.0 387.2 L578.8 384.7 L579.6 385.0 L580.4 384.3 L581.2 386.5 L582.0 382.4 L582.8 385.1 L583.3 388.8 Z" fill="#2fa8f2"/>
<g fill="#eef4ff"><ellipse cx="534.4" cy="382" rx="1.5" ry="1.2"/><path d="M535.3 382 V376 L537.2 378 L536.8 378.6 L536 377.8 V382 Z"/></g>
<rect x="336.3" y="300.5" width="1" height="90" fill="#c8992e"/><!--TL1--><!--IC0--><!-- icons -->
<g id="icons">
  <!-- speaker -->
  <g fill="#c9a53c" stroke="#c9a53c" stroke-width="0.7">
    <path d="M6.6 274.6 H8.4 L10.6 272.9 V278.7 L8.4 277 H6.6 Z" stroke="none"/>
    <path d="M11.8 274.2 Q12.8 275.8 11.8 277.4" fill="none"/>
    <path d="M13.2 273 Q15.2 275.8 13.2 278.6" fill="none"/>
  </g>
  <!-- add audio -->
  <g stroke="#ededed" stroke-width="0.7" fill="none">
    <path d="M48.4 269.6 H51.4 M49.9 268.1 V271.1"/>
    <path d="M52.2 273.6 V268.6 L55.2 269.6 V274"/>
    <ellipse cx="51.4" cy="273.8" rx="0.9" ry="0.7" fill="#ededed"/>
    <ellipse cx="54.4" cy="274.2" rx="0.9" ry="0.7" fill="#ededed"/>
  </g>
  <!-- record mic -->
  <g stroke="#ededed" stroke-width="0.8" fill="none">
    <rect x="87.1" y="267.3" width="3" height="5.4" rx="1.5" fill="none" stroke-width="1"/>
    <path d="M86 271 Q86 274.2 88.6 274.2 Q91.2 274.2 91.2 271 M88.6 274.2 V275.8"/>
  </g>
  <!-- play -->
  <path d="M311.6 271.8 L319.6 276.2 L311.6 280.6 Z" fill="#f5c02f" stroke="#fbe7a8" stroke-width="0.7" stroke-linejoin="round"/>
  <!-- fade -->
  <g fill="#ededed">
    <rect x="574.4" y="269.6" width="0.7" height="3.8"/>
    <path d="M570.6 271.5 L573 270 V271.1 H576.5 V270 L578.9 271.5 L576.5 273 V271.9 H573 V273 Z"/>
  </g>
  <!-- delete -->
  <g stroke="#ededed" stroke-width="0.8" fill="none">
    <path d="M607.8 268.6 H614.8 M610 268.6 V267.2 H612.6 V268.6"/>
    <path d="M608.6 268.8 L609 275.4 H613.6 L614 268.8"/>
    <path d="M610.4 270.4 V273.8 M612.2 270.4 V273.8" stroke-width="0.6"/>
  </g>
  <!-- frame icon -->
  <rect x="5.6" y="316.6" width="10.8" height="7" fill="none" stroke="#d0d0d0" stroke-width="1"/>
  <!-- music notes -->
  <g id="mnote" stroke="#dcdcdc" fill="none" stroke-width="1">
    <ellipse cx="9.4" cy="360.6" rx="1.9" ry="1.6"/>
    <path d="M11.3 360.6 V352.2 Q11.6 354.2 13.4 355.2 Q14.4 356 13.6 357.4"/>
  </g>
  <use href="#mnote" y="22.4"/>
</g>
<!--IC1-->
</svg>

<div id="tl">00:02.1</div>
<div class="lbl" style="left:30px;top:281.3px;width:43px">Add Audio</div>
<div class="lbl" style="left:68px;top:281.3px;width:41px">Record</div>
<div class="lbl" style="left:554px;top:281.3px;width:41px">Fade</div>
<div class="lbl" style="left:590.5px;top:281.3px;width:41px">Delete</div>
<div class="tk" style="left:290.3px;top:307.8px">0s</div>
<div class="tk" style="left:496.5px;top:308px">10s</div>
<div class="clipt" style="left:396px;top:376.5px;letter-spacing:0.12px">boiling.mp3</div>
<div class="clipt" style="left:542px;top:376.5px;color:#e6f0ff">Swish.mp3</div>
<div class="sub" style="left:13.6px;top:357.6px">1</div>
<div class="sub" style="left:13.6px;top:380px">2</div>
<div id="status">Video legth with audio: 00:16.0</div>
<div class="btn" style="left:537px;width:35.8px">Save</div>
<div class="btn" style="left:582px;width:35.2px">Cancel</div>

<div id="caption">Audio Editor</div>
</div>
</body>
</html>
